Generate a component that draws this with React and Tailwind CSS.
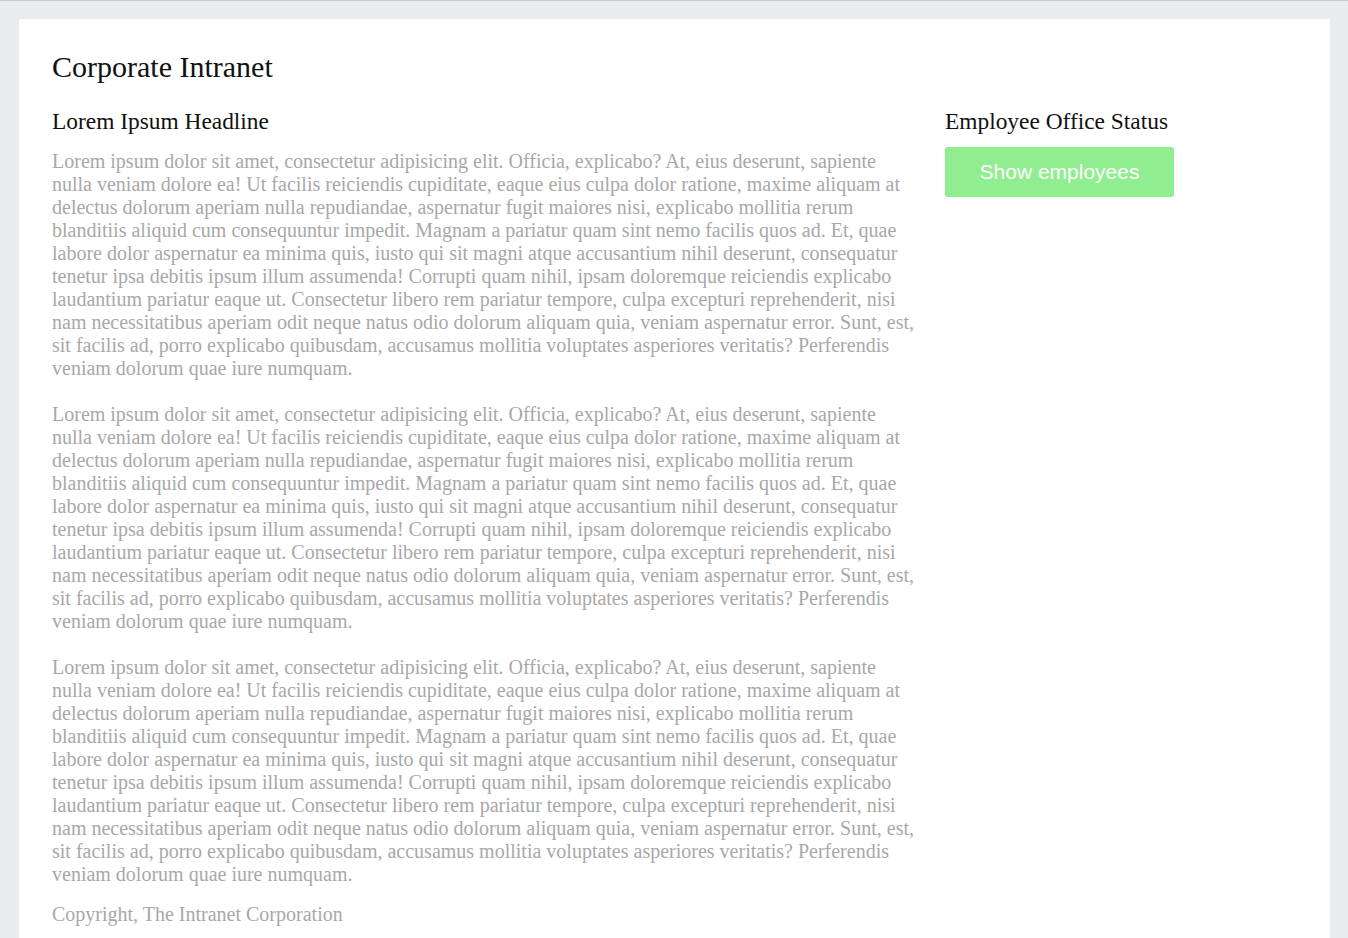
import React from "react";

const lorem =
  "Lorem ipsum dolor sit amet, consectetur adipisicing elit. Officia, explicabo? At, eius deserunt, sapiente nulla veniam dolore ea! Ut facilis reiciendis cupiditate, eaque eius culpa dolor ratione, maxime aliquam at delectus dolorum aperiam nulla repudiandae, aspernatur fugit maiores nisi, explicabo mollitia rerum blanditiis aliquid cum consequuntur impedit. Magnam a pariatur quam sint nemo facilis quos ad. Et, quae labore dolor aspernatur ea minima quis, iusto qui sit magni atque accusantium nihil deserunt, consequatur tenetur ipsa debitis ipsum illum assumenda! Corrupti quam nihil, ipsam doloremque reiciendis explicabo laudantium pariatur eaque ut. Consectetur libero rem pariatur tempore, culpa excepturi reprehenderit, nisi nam necessitatibus aperiam odit neque natus odio dolorum aliquam quia, veniam aspernatur error. Sunt, est, sit facilis ad, porro explicabo quibusdam, accusamus mollitia voluptates asperiores veritatis? Perferendis veniam dolorum quae iure numquam.";

const App = () => {
  return (
    <div className="min-h-screen bg-[#ebecee] border-t border-[#c9c9c9] pt-[18px] pl-[19px] pr-[18px] font-['Liberation_Serif',serif]">
      <div className="bg-white pt-[31px] pl-[33px] pb-8">
        <h1 className="text-[30px] leading-[34px] text-[#111]">Corporate Intranet</h1>

        <div className="flex mt-[23px]">
          <div className="w-[866px]">
            <h2 className="text-[23.4px] leading-[28px] text-[#111]">Lorem Ipsum Headline</h2>
            <div className="mt-[15px] text-[20px] leading-[23px] text-[#a8a8a8]">
              <p>{lorem}</p>
              <p className="mt-[23px]">{lorem}</p>
              <p className="mt-[23px]">{lorem}</p>
              <p className="mt-[17px]">Copyright, The Intranet Corporation</p>
            </div>
          </div>

          <div className="ml-[27px]">
            <h2 className="text-[23.4px] leading-[28px] text-[#111]">Employee Office Status</h2>
            <button
              type="button"
              className="mt-[12px] w-[229px] h-[50px] rounded-[3px] bg-[#90ee90] text-white text-[21px] font-['Liberation_Sans',sans-serif]"
            >
              Show employees
            </button>
          </div>
        </div>
      </div>
    </div>
  );
};

export default App;
